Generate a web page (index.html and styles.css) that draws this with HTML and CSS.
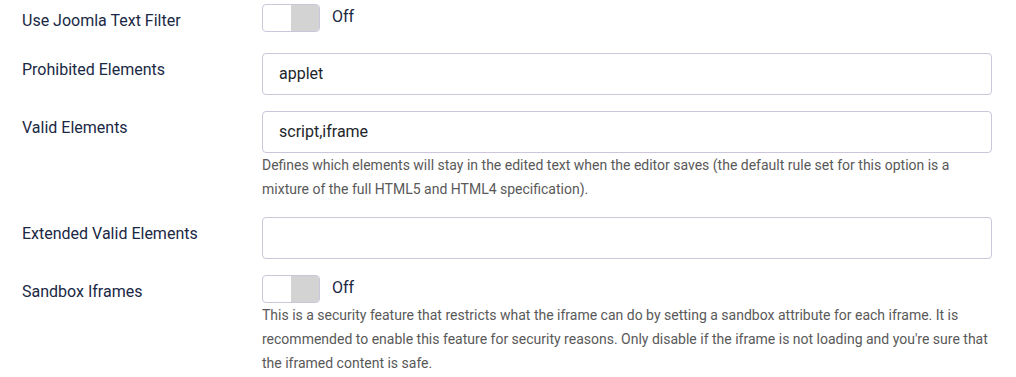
FILE: index.html
```html
<!DOCTYPE html>
<html lang="en">
<head>
<meta charset="utf-8">
<title>Editor options</title>
<link rel="stylesheet" href="styles.css">
</head>
<body>
<div class="form">
  <div class="row row-first">
    <div class="label">Use Joomla Text Filter</div>
    <div class="control">
      <div class="switch-line">
        <span class="switch"><span class="knob"></span></span>
        <span class="switch-text">Off</span>
      </div>
    </div>
  </div>
  <div class="row">
    <div class="label">Prohibited Elements</div>
    <div class="control"><div class="input">applet</div></div>
  </div>
  <div class="row">
    <div class="label">Valid Elements</div>
    <div class="control">
      <div class="input">script,iframe</div>
      <div class="help">Defines which elements will stay in the edited text when the editor saves (the default rule set for this option is a mixture of the full HTML5 and HTML4 specification).</div>
    </div>
  </div>
  <div class="row">
    <div class="label">Extended Valid Elements</div>
    <div class="control"><div class="input"></div></div>
  </div>
  <div class="row">
    <div class="label">Sandbox Iframes</div>
    <div class="control">
      <div class="switch-line">
        <span class="switch"><span class="knob"></span></span>
        <span class="switch-text">Off</span>
      </div>
      <div class="help">This is a security feature that restricts what the iframe can do by setting a sandbox attribute for each iframe. It is recommended to enable this feature for security reasons. Only disable if the iframe is not loading and you're sure that the iframed content is safe.</div>
    </div>
  </div>
</div>
</body>
</html>
```
FILE: styles.css
```css
html, body {
  margin: 0;
  padding: 0;
  background: #ffffff;
}
body {
  font-family: Roboto, "Noto Sans", sans-serif;
  color: #1c2a45;
  width: 1016px;
  height: 377px;
  overflow: hidden;
}
.form {
  padding: 4px 24px 0 22px;
  display: flex;
  flex-direction: column;
}
.row {
  display: flex;
  margin-bottom: 16px;
}
.row-first {
  margin-bottom: 20px;
}
.label {
  width: 240px;
  flex: none;
  font-size: 16px;
  line-height: 24px;
  padding-top: 5px;
  color: #1a2844;
}
.control {
  flex: 1;
  min-width: 0;
}
.input {
  box-sizing: border-box;
  height: 42px;
  border: 1px solid #cdc5da;
  border-radius: 4px;
  padding: 0 16px;
  font-size: 16px;
  line-height: 40px;
  color: #22262a;
}
.help {
  font-size: 14px;
  line-height: 24px;
  color: #595959;
}
.switch-line {
  display: flex;
  align-items: center;
  height: 28px;
}
.switch {
  box-sizing: border-box;
  width: 58px;
  height: 28px;
  border: 1px solid #cdc5da;
  border-radius: 4px;
  background: #ffffff;
  display: flex;
  justify-content: flex-end;
  overflow: hidden;
}
.knob {
  width: 28px;
  height: 100%;
  background: #d3d3d3;
}
.switch-text {
  margin-left: 12px;
  font-size: 16px;
  line-height: 24px;
  margin-top: -2px;
  color: #1a2844;
}
```
